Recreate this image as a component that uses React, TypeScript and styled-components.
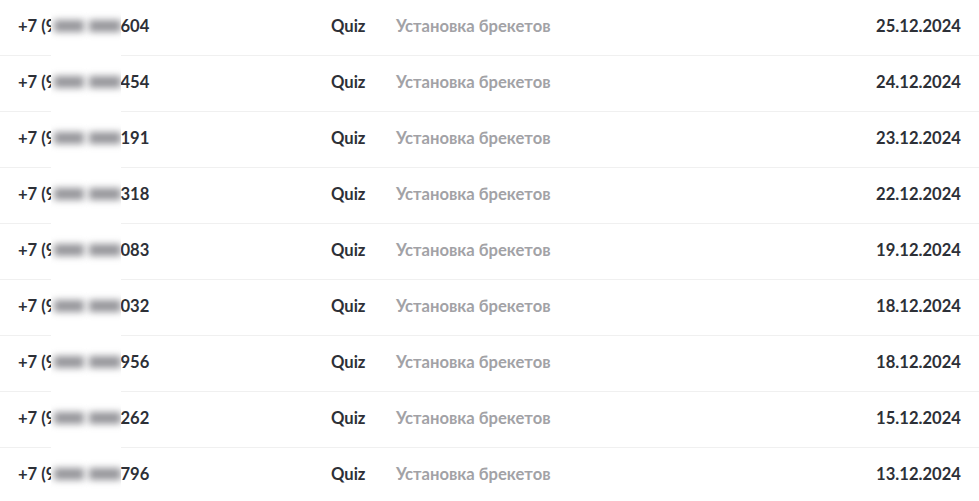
import React from 'react';
import styled, { createGlobalStyle } from 'styled-components';

interface ILead {
  tail: string;
  source: string;
  service: string;
  date: string;
}

const leads: Array<ILead> = [
  { tail: '604', source: 'Quiz', service: 'Установка брекетов', date: '25.12.2024' },
  { tail: '454', source: 'Quiz', service: 'Установка брекетов', date: '24.12.2024' },
  { tail: '191', source: 'Quiz', service: 'Установка брекетов', date: '23.12.2024' },
  { tail: '318', source: 'Quiz', service: 'Установка брекетов', date: '22.12.2024' },
  { tail: '083', source: 'Quiz', service: 'Установка брекетов', date: '19.12.2024' },
  { tail: '032', source: 'Quiz', service: 'Установка брекетов', date: '18.12.2024' },
  { tail: '956', source: 'Quiz', service: 'Установка брекетов', date: '18.12.2024' },
  { tail: '262', source: 'Quiz', service: 'Установка брекетов', date: '15.12.2024' },
  { tail: '796', source: 'Quiz', service: 'Установка брекетов', date: '13.12.2024' },
];

const GlobalStyle = createGlobalStyle`
  html, body {
    margin: 0;
    padding: 0;
    background: #fff;
    overflow: hidden;
  }
  body {
    font-family: Lato, 'Noto Sans', sans-serif;
  }
`;

const App: React.FC = () => {
  return (
    <>
      <GlobalStyle />
      <List>
        {leads.map((v, i) => (
          <Row key={i}>
            <Phone>
              +7 (9<Hidden />
              {v.tail}
            </Phone>
            <Source>{v.source}</Source>
            <Service>{v.service}</Service>
            <DateCell>{v.date}</DateCell>
            <Mask aria-hidden>
              <Blob $w={30} />
              <Blob $w={32} />
            </Mask>
          </Row>
        ))}
      </List>
    </>
  );
};

export default App;

const List = styled.div`
  display: flex;
  flex-direction: column;
`;

const Row = styled.div`
  position: relative;
  display: grid;
  grid-template-columns: 313px 65px 1fr auto;
  align-items: center;
  height: 56px;
  box-sizing: border-box;
  padding: 0 18px 4px;
  border-bottom: 1px solid #f0f0f0;
  font-size: 16.6px;
  font-weight: 700;
  color: #2d3037;
`;

const Phone = styled.div`
  white-space: nowrap;
`;

const Hidden = styled.span`
  display: inline-block;
  width: 65px;
`;

const Source = styled.div``;

const Service = styled.div`
  color: #a2a2a6;
`;

const DateCell = styled.div`
  text-align: right;
`;

const Mask = styled.div`
  position: absolute;
  left: 51px;
  top: 10px;
  width: 70px;
  height: 56px;
  box-sizing: border-box;
  padding: 10px 0 0 3px;
  display: flex;
  align-items: flex-start;
  gap: 5px;
  background: #fff;
  overflow: hidden;
  z-index: 1;
`;

const Blob = styled.span<{ $w: number }>`
  display: block;
  width: ${p => p.$w}px;
  height: 12px;
  background: #96969b;
  filter: blur(3.5px);
`;
